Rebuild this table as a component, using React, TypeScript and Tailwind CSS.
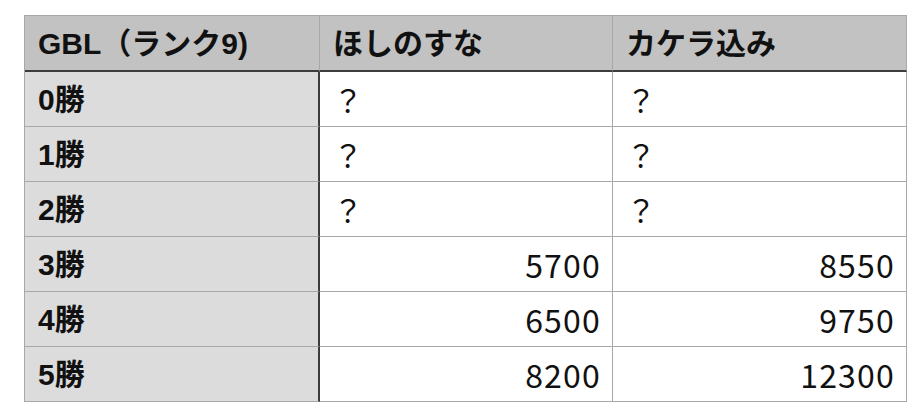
const rows: { label: string; a: string; b: string }[] = [
  { label: "0勝", a: "？", b: "？" },
  { label: "1勝", a: "？", b: "？" },
  { label: "2勝", a: "？", b: "？" },
  { label: "3勝", a: "5700", b: "8550" },
  { label: "4勝", a: "6500", b: "9750" },
  { label: "5勝", a: "8200", b: "12300" },
]

const head =
  "h-[56px] bg-[#c1c2c1] border-r border-b-2 border-r-[#a8a8a8] border-b-[#3c3c3c] flex items-center pl-[13px] text-[30px] font-bold"

export default function App() {
  return (
    <div
      className="w-[924px] h-[420px] bg-white pt-[15px] pl-[24px] text-[#111]"
      style={{ fontFamily: '"Liberation Sans", "Noto Sans CJK JP", sans-serif' }}
    >
      <div className="grid grid-cols-[295px_293px_294px] w-[883px] border-t border-l border-[#a8a8a8]">
        {/* header */}
        <div className={head}>GBL（ランク9)</div>
        <div className={head}>ほしのすな</div>
        <div className={head}>カケラ込み</div>

        {rows.map((r) => {
          const num = r.a !== "？"
          const cell =
            "h-[55px] border-r border-b border-[#a8a8a8] flex items-center font-normal " +
            (num
              ? "justify-end pr-[11px] text-[32px] tracking-[1.2px] font-['Noto_Sans_CJK_JP']"
              : "pl-[13px] text-[30px] font-['Noto_Sans_CJK_JP']")
          return [
            <div
              key={r.label + "l"}
              className="h-[55px] bg-[#dcdcdc] border-r-2 border-b border-r-[#3c3c3c] border-b-[#a8a8a8] flex items-center pl-[13px] text-[30px] font-bold"
            >
              {r.label}
            </div>,
            <div key={r.label + "a"} className={cell}>
              {r.a}
            </div>,
            <div key={r.label + "b"} className={cell}>
              {r.b}
            </div>,
          ]
        })}
      </div>
    </div>
  )
}
